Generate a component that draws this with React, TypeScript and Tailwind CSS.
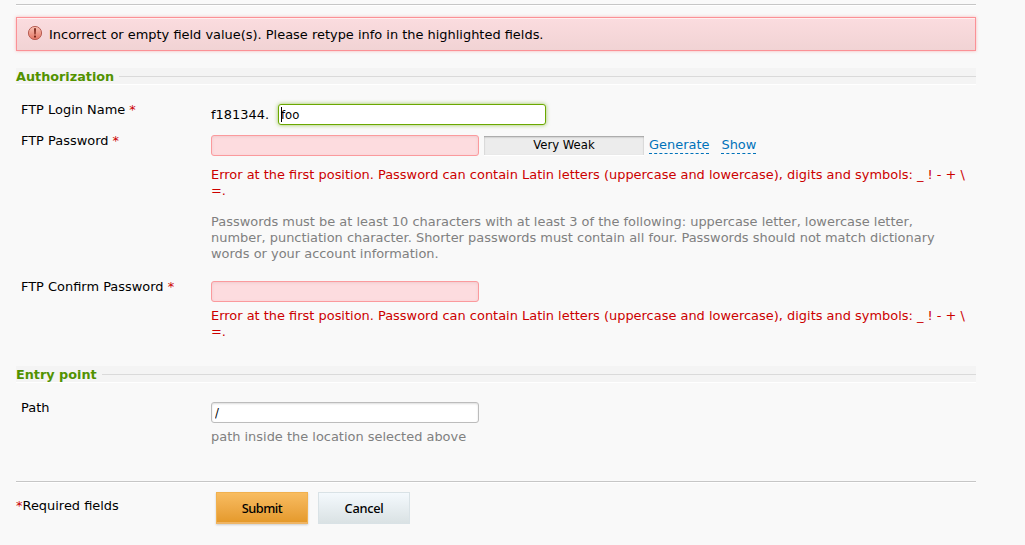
import type { ReactNode } from 'react';

function Star() {
  return <span className="text-[#cc0000]">*</span>;
}

function Divider() {
  return <div className="h-0.5 border-t border-b border-t-[#c6c6c6] border-b-white" />;
}

function Section({ title }: { title: string }) {
  return (
    <div className="flex h-[17px] items-center border-b border-white bg-[#f4f4f4]">
      <h2 className="pr-[5px] pt-px text-[12.8px] font-bold leading-4 text-[#529200]">{title}</h2>
      <div className="h-px flex-1 bg-[#dadada]" />
    </div>
  );
}

function Row({ label, required, children, className }: { label: string; required?: boolean; children: ReactNode; className: string }) {
  return (
    <div className={`flex ${className}`}>
      <label className="w-[195px] shrink-0 pl-[5px]">
        {label} {required && <Star />}
      </label>
      <div className="flex w-[760px] flex-col">{children}</div>
    </div>
  );
}

const invalidInput =
  'block h-[21px] w-[268px] rounded-[3px] border border-[#fb9a9d] bg-[#fddcdf] shadow-[inset_0_1px_3px_rgba(120,60,60,0.1)] outline-none';

function FieldError({ className }: { className: string }) {
  return (
    <p className={`text-[#cc0000] ${className}`}>
      Error at the first position. Password can contain Latin letters (uppercase and lowercase), digits and symbols: _ ! - + \ =.
    </p>
  );
}

function AlertIcon() {
  return (
    <svg className="mt-[7px] h-4 w-4" viewBox="0 0 16 16">
      <defs>
        <linearGradient id="alert" x1="0" y1="0" x2="0" y2="1">
          <stop offset="0" stopColor="#f9c2b5" />
          <stop offset="1" stopColor="#e37462" />
        </linearGradient>
      </defs>
      <circle cx="8" cy="8" r="6.6" fill="url(#alert)" stroke="#b85e54" />
      <path d="M7 3.2h2l-.4 6.2H7.4z" fill="#782519" />
      <rect x="7" y="10.5" width="2" height="2" rx=".6" fill="#782519" />
    </svg>
  );
}

export default function App() {
  return (
    <main className="h-[545px] overflow-hidden bg-[#f9f9f9] pl-4 pt-1 font-['DejaVu_Sans',sans-serif] text-[12.95px] leading-4 text-black">
      <form className="w-[960px]" onSubmit={(e) => e.preventDefault()}>
        <Divider />
        <div className="mt-[11px] flex h-[34px] border border-[#fb9196] bg-linear-to-b from-[#fbdcdf] to-[#f1d3d4] pl-[10px] shadow-[0_0_3px_rgba(250,120,120,0.5),inset_0_1px_0_#fff0f0]">
          <AlertIcon />
          <span className="ml-[6px] mt-[9px]">Incorrect or empty field value(s). Please retype info in the highlighted fields.</span>
        </div>
        <div className="mt-[17px]">
          <Section title="Authorization" />
        </div>

        <Row label="FTP Login Name" required className="mt-[17px] h-[31px]">
          <div className="mt-[2px] flex">
            <span className="mt-[3px] w-[67px]">f181344.</span>
            <div className="flex h-[21px] w-[268px] items-center rounded-[3px] border border-[#6ba800] bg-white pl-[2px] font-['DejaVu_Sans_Condensed','DejaVu_Sans',sans-serif] shadow-[0_0_4px_rgba(105,170,0,0.65)]">
              <span className="h-[15px] w-px bg-black" />
              <span className="-ml-px">foo</span>
            </div>
          </div>
        </Row>

        <Row label="FTP Password" required className="h-[146px]">
          <div className="mt-[2px] flex h-[21px]">
            <input type="password" className={invalidInput} />
            <div className="ml-[5px] mt-px h-5 w-40 border-b border-white bg-[#ececec] pt-px text-center font-['DejaVu_Sans_Condensed','DejaVu_Sans',sans-serif] leading-4 shadow-[inset_0_2px_2px_-1px_#999,inset_1px_0_1px_#ddd,inset_-1px_0_1px_#ddd]">
              Very Weak
            </div>
            <a href="#" className="ml-[5px] mt-[2px] h-[17px] border-b border-dashed border-[#0072ba] text-[#0072ba]">Generate</a>
            <a href="#" className="ml-3 mt-[2px] h-[17px] border-b border-dashed border-[#0072ba] text-[#0072ba]">Show</a>
          </div>
          <FieldError className="mt-[11px]" />
          <p className="mt-[15px] text-[#808080]">
            Passwords must be at least 10 characters with at least 3 of the following: uppercase letter, lowercase letter, number, punctiation character. Shorter passwords must contain all four. Passwords should not match dictionary words or your account information.
          </p>
        </Row>

        <Row label="FTP Confirm Password" required className="h-[87px]">
          <input type="password" className={`mt-[2px] ${invalidInput}`} />
          <FieldError className="mt-[6px]" />
        </Row>

        <Section title="Entry point" />

        <Row label="Path" className="mt-[17px] h-[81px]">
          <input
            defaultValue="/"
            className="mt-[2px] h-[21px] w-[268px] rounded-[3px] border border-[#bcbcbc] bg-white pl-[3px] font-['DejaVu_Sans_Condensed','DejaVu_Sans',sans-serif] shadow-[inset_0_1px_2px_#ddd] outline-none"
          />
          <p className="mt-[6px] text-[#808080]">path inside the location selected above</p>
        </Row>

        <Divider />
        <div className="mt-[9px] flex font-['Noto_Sans',sans-serif]">
          <div className="mt-[6px] w-[200px] font-['DejaVu_Sans',sans-serif]">
            <Star />Required fields
          </div>
          <button className="h-8 w-[92px] border border-b-2 border-[#f1b14f] border-b-[#efb565] bg-linear-to-b from-[#f8bc60] to-[#e59a2b] text-[12.8px] font-medium tracking-[-0.5px] shadow-[0_1px_2px_rgba(0,0,0,0.18)]">
            Submit
          </button>
          <button className="ml-[10px] h-8 w-[92px] border border-[#d9e2e6] bg-linear-to-b from-[#f4f9fd] to-[#dae2e4] text-[12.8px] font-medium tracking-[-0.3px]">
            Cancel
          </button>
        </div>
      </form>
    </main>
  );
}
